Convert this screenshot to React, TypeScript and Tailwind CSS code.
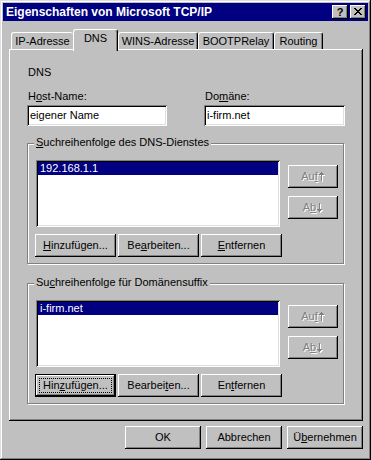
import type { ReactNode } from "react";

const raised = "shadow-[inset_-1px_-1px_0_#000,inset_1px_1px_0_#fff,inset_-2px_-2px_0_#808080]";
const defaultRaised = "border border-black shadow-[inset_-1px_-1px_0_#000,inset_1px_1px_0_#fff,inset_-2px_-2px_0_#808080]";
const sunken = "shadow-[inset_1px_1px_0_#808080,inset_-1px_-1px_0_#fff,inset_2px_2px_0_#000,inset_-2px_-2px_0_#dfdfdf]";

const K = ({ children }: { children: ReactNode }) => <span className="underline underline-offset-[1px]">{children}</span>;

// disabled arrow glyph, grey with a white shadow like the etched text
const Arrow = ({ down }: { down?: boolean }) => {
  const d = down ? "M2 0h1v6h-1z M0 6h5v1h-5z M1 7h3v1h-3z M2 8h1v1h-1z" : "M2 0h1v1h-1z M1 1h3v1h-3z M0 2h5v1h-5z M2 3h1v6h-1z";
  return (
    <svg width="6" height="10" viewBox="0 0 6 10" shapeRendering="crispEdges" className="ml-[1px]">
      <path d={d} fill="#fff" transform="translate(1 1)" />
      <path d={d} fill="#808080" />
    </svg>
  );
};

type BtnProps = {
  w: string;
  children: ReactNode;
  disabled?: boolean;
  focused?: boolean;
};

const Btn = ({ w, children, disabled, focused }: BtnProps) => (
  <div
    className={`relative flex h-[23px] shrink-0 items-center justify-center bg-[#c0c0c0] leading-[13px] ${w} ${focused ? defaultRaised : raised} ${
      disabled ? "text-[#808080] [text-shadow:1px_1px_0_#fff]" : "text-black"
    }`}
  >
    {children}
    {focused && <span className="pointer-events-none absolute inset-[3px] border border-dotted border-black" />}
  </div>
);

const GroupBox = ({ legend, item, keys }: { legend: ReactNode; item: string; keys: ReactNode[] }) => (
  <div className="relative h-[121px] w-[317px] border border-[#808080] shadow-[inset_1px_1px_0_#fff,1px_1px_0_#fff]">
    <span className="absolute left-[6px] top-[-8px] bg-[#c0c0c0] px-[2px] leading-[13px]">{legend}</span>
    <div className="flex pl-[8px] pt-[16px]">
      <div className="flex flex-col">
        <div className={`h-[67px] w-[244px] bg-white p-[2px] ${sunken}`}>
          <div className="h-[13px] bg-[#000080] pl-[2px] leading-[13px] text-white">{item}</div>
        </div>
        <div className="-ml-px mt-[7px] flex gap-[2px]">
          <Btn w="w-[81px]" focused={item === "i-firm.net"}>{keys[0]}</Btn>
          <Btn w="w-[81px]">{keys[1]}</Btn>
          <Btn w="w-[81px]">{keys[2]}</Btn>
        </div>
      </div>
      <div className="ml-[6px] mt-[5px] flex flex-col gap-[8px]">
        <Btn w="w-[50px]" disabled>
          Au<K>f</K>
          <Arrow />
        </Btn>
        <Btn w="w-[50px]" disabled>
          A<K>b</K>
          <Arrow down />
        </Btn>
      </div>
    </div>
  </div>
);

const tabBase = "flex justify-center rounded-t-[3px] border-l border-t border-white pt-[2px] leading-[13px] shrink-0";

export default function App() {
  return (
    <div className="flex h-[460px] w-[371px] flex-col bg-[#c0c0c0] p-[3px] font-['Liberation_Sans',Arial,sans-serif] text-[11px] text-black shadow-[inset_-1px_-1px_0_#000,inset_1px_1px_0_#dfdfdf,inset_-2px_-2px_0_#808080,inset_2px_2px_0_#fff]">
      {/* Title bar */}
      <div className="flex h-[18px] items-center bg-[#000080] pl-[3px] pr-[2px]">
        <span className="flex-1 text-[12px] font-bold leading-[14px] text-white">Eigenschaften von Microsoft TCP/IP</span>
        <div className="flex gap-[2px]">
          <div className={`flex h-[14px] w-[16px] items-center justify-center bg-[#c0c0c0] text-[11px] font-bold leading-[12px] ${raised}`}>?</div>
          <div className={`flex h-[14px] w-[16px] items-center justify-center bg-[#c0c0c0] ${raised}`}>
            <svg width="8" height="7" viewBox="0 0 8 7" shapeRendering="crispEdges" className="-mt-px">
              <path
                fill="#000"
                d="M0 0h2v1h-2z M6 0h2v1h-2z M1 1h2v1h-2z M5 1h2v1h-2z M2 2h4v1h-4z M3 3h2v1h-2z M2 4h4v1h-4z M1 5h2v1h-2z M5 5h2v1h-2z M0 6h2v1h-2z M6 6h2v1h-2z"
              />
            </svg>
          </div>
        </div>
      </div>

      {/* Tabs */}
      <div className="ml-[8px] mt-[8px] flex items-end">
        <div className={`${tabBase} h-[17px] w-[62px]`}>IP-Adresse</div>
        <div className={`${tabBase} relative z-10 -mb-[2px] h-[22px] w-[45px] border-r border-r-black bg-[#c0c0c0] shadow-[inset_-1px_0_0_#808080]`}>DNS</div>
        <div className={`${tabBase} h-[17px] w-[80px] border-r border-r-black shadow-[inset_-1px_0_0_#808080]`}>WINS-Adresse</div>
        <div className={`${tabBase} h-[17px] w-[76px] border-r border-r-black shadow-[inset_-1px_0_0_#808080]`}>BOOTPRelay</div>
        <div className={`${tabBase} h-[17px] w-[49px] border-r border-r-black shadow-[inset_-1px_0_0_#808080]`}>Routing</div>
      </div>

      {/* Panel */}
      <div className={`ml-[6px] h-[372px] w-[354px] pl-[18px] pt-[17px] ${raised}`}>
        <div className="pl-px leading-[13px]">DNS</div>
        <div className="mt-[11px] flex">
          <div className="flex flex-col">
            <div className="pl-px leading-[13px]">
              H<K>o</K>st-Name:
            </div>
            <div className={`mt-[2px] h-[21px] w-[140px] bg-white pl-[3px] leading-[21px] ${sunken}`}>eigener Name</div>
          </div>
          <div className="ml-[37px] flex flex-col">
            <div className="pl-px leading-[13px]">
              Do<K>m</K>äne:
            </div>
            <div className={`mt-[2px] h-[21px] w-[141px] bg-white pl-[3px] leading-[21px] ${sunken}`}>i-firm.net</div>
          </div>
        </div>

        <div className="mt-[17px]">
          <GroupBox
            legend={
              <>
                <K>S</K>uchreihenfolge des DNS-Dienstes
              </>
            }
            item="192.168.1.1"
            keys={[
              <>
                <K>H</K>inzufügen...
              </>,
              <>
                Be<K>a</K>rbeiten...
              </>,
              <>
                <K>E</K>ntfernen
              </>,
            ]}
          />
        </div>
        <div className="mt-[19px]">
          <GroupBox
            legend={
              <>
                Su<K>c</K>hreihenfolge für Domänensuffix
              </>
            }
            item="i-firm.net"
            keys={[
              <>
                Hin<K>z</K>ufügen...
              </>,
              <>
                Bearbei<K>t</K>en...
              </>,
              <>
                En<K>t</K>fernen
              </>,
            ]}
          />
        </div>
      </div>

      {/* Dialog buttons */}
      <div className="mt-[5px] flex justify-end gap-[5px] pr-[5px]">
        <Btn w="w-[76px]">OK</Btn>
        <Btn w="w-[76px]">Abbrechen</Btn>
        <Btn w="w-[76px]">
          Ü<K>b</K>ernehmen
        </Btn>
      </div>
    </div>
  );
}
